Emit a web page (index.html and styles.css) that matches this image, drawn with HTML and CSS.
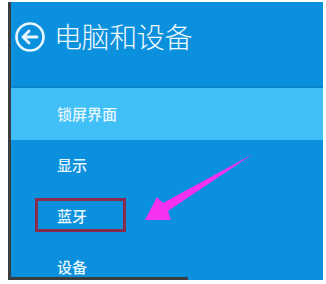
FILE: index.html
```html
<!DOCTYPE html>
<html lang="zh-CN">
<head>
<meta charset="utf-8">
<link rel="stylesheet" href="styles.css">
</head>
<body>
<div class="panel">
  <div class="header">
    <svg class="back" width="30" height="30" viewBox="0 0 30 30">
      <circle cx="15" cy="15" r="13.5" fill="none" stroke="#e8f6ff" stroke-width="2.6"/>
      <path d="M8 15 H22 M14 9 L8 15 L14 21" fill="none" stroke="#e8f6ff" stroke-width="2.8" stroke-linecap="round" stroke-linejoin="round"/>
    </svg>
    <h1 class="title">电脑和设备</h1>
  </div>
  <ul class="menu">
    <li class="item active">锁屏界面</li>
    <li class="item">显示</li>
    <li class="item mark">蓝牙<span class="redbox"></span></li>
    <li class="item">设备</li>
  </ul>
  <div class="bottom-line"></div>
  <svg class="arrow" width="326" height="284" viewBox="0 0 326 284">
    <polygon points="145,220 157,197 163,203 253,154 168,211 171,220" fill="#f532f0"/>
  </svg>
</div>
</body>
</html>
```
FILE: styles.css
```css
html, body {
  margin: 0;
  padding: 0;
  background: #ffffff;
}
body {
  width: 326px;
  height: 284px;
  overflow: hidden;
  font-family: "Noto Sans CJK SC", "Noto Sans", sans-serif;
}
.panel {
  margin: 2px 0 0 8px;
  width: 312px;
  height: 278px;
  border-left: 3px solid #3a3c40;
  background: #0a90dc;
  overflow: hidden;
  position: relative;
}
.header {
  height: 86px;
  display: flex;
  align-items: flex-start;
  padding-top: 20px;
  box-sizing: border-box;
  border-bottom: 2px solid #0783cc;
}
.back {
  margin-left: 4px;
  flex: none;
}
.title {
  margin: 0 0 0 9px;
  font-size: 28px;
  line-height: 29px;
  font-weight: 300;
  color: #eef8ff;
  letter-spacing: -0.4px;
}
.menu {
  list-style: none;
  margin: 0;
  padding: 0;
}
.item {
  height: 51px;
  box-sizing: border-box;
  padding-left: 46px;
  padding-bottom: 2px;
  display: flex;
  align-items: center;
  font-size: 15px;
  font-weight: 500;
  color: #e6f6ff;
  position: relative;
}
.item.active {
  background: #40c0f6;
  height: 52px;
}
.redbox {
  position: absolute;
  left: 24px;
  top: 7px;
  width: 91px;
  height: 34px;
  box-sizing: border-box;
  border: 3px solid #8a2a4c;
}
.bottom-line {
  position: absolute;
  left: 0;
  bottom: 0;
  width: 177px;
  height: 3px;
  background: #3a3c40;
}
.arrow {
  position: absolute;
  left: -11px;
  top: -2px;
  pointer-events: none;
}
```
